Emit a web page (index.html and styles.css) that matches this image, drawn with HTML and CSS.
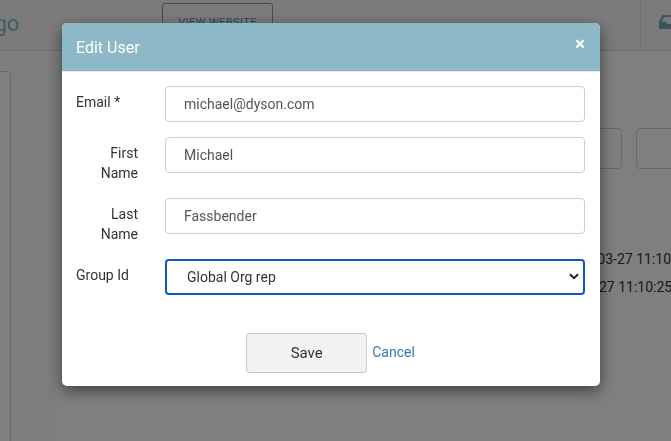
FILE: index.html
```html
<!DOCTYPE html>
<html>
<head>
<meta charset="utf-8">
<link rel="stylesheet" href="styles.css">
</head>
<body>
<div class="page">
  <header class="topbar">
    <div class="logo">Logo</div>
    <a class="view-btn">VIEW WEBSITE</a>
    <div class="spacer"></div>
    <div class="topbar-sep"></div>
    <div class="topbar-icon">
      <svg class="inbox" width="20" height="14" viewBox="0 0 20 14"><path d="M3.5 0h13L20 6.5V14H0V6.5z" fill="#7aa9bf"/><path d="M2.6 6.5h4.6l1.2 2.6h3.2l1.2-2.6h4.6L14.8 2H5.2z" fill="#f4f4f4"/></svg>
    </div>
  </header>
  <div class="content">
    <aside class="side"><div class="side-card"></div></aside>
    <main class="main">
      <div class="toolbar">
        <div class="tbox tbox-a"></div>
        <div class="tbox tbox-b"></div>
      </div>
      <div class="rows">
        <div class="row row-a">2019-03-27 11:10:25</div>
        <div class="row row-b">2019-03-27 11:10:25</div>
      </div>
    </main>
  </div>
</div>

<div class="overlay">
  <div class="modal">
    <div class="modal-header">
      <h4 class="modal-title">Edit User</h4>
      <span class="close">&times;</span>
    </div>
    <div class="modal-body">
      <div class="form-row">
        <label class="lbl">Email *</label>
        <input class="ctl" type="text" value="michael@dyson.com">
      </div>
      <div class="form-row">
        <label class="lbl">First Name</label>
        <input class="ctl" type="text" value="Michael">
      </div>
      <div class="form-row">
        <label class="lbl">Last Name</label>
        <input class="ctl" type="text" value="Fassbender">
      </div>
      <div class="form-row">
        <label class="lbl">Group Id</label>
        <div class="select-wrap">
          <select class="ctl sel"><option>Global Org rep</option></select>
          <svg class="chev" width="10" height="7" viewBox="0 0 10 7"><path d="M1 1.2l4 4 4-4" fill="none" stroke="#222" stroke-width="2"/></svg>
        </div>
      </div>
    </div>
    <div class="modal-footer">
      <button class="btn-save">Save</button>
      <a class="cancel">Cancel</a>
    </div>
  </div>
</div>
</body>
</html>
```
FILE: styles.css
```css
* { box-sizing: border-box; }
html, body { margin: 0; padding: 0; }
body {
  font-family: Roboto, "Liberation Sans", sans-serif;
  font-size: 14px;
  color: #333;
  background: #fff;
  width: 671px;
  height: 441px;
  overflow: hidden;
}
.page { width: 671px; height: 441px; overflow: hidden; }
.topbar {
  height: 51px;
  background: #f6f6f6;
  border-bottom: 1px solid #dcdcdc;
  display: flex;
  align-items: flex-start;
}
.logo {
  margin-left: -30px;
  margin-top: 11px;
  font-size: 22px;
  color: #86b6ca;
  width: 170px;
  flex: none;
}
.view-btn {
  margin-left: 22px;
  margin-top: 3px;
  width: 111px;
  height: 38px;
  border: 1px solid #7a9aa8;
  border-radius: 3px;
  font-size: 11px;
  letter-spacing: 0.4px;
  color: #6c8e9c;
  display: flex;
  justify-content: center;
  padding-top: 12px;
  flex: none;
}
.spacer { flex: 1; min-width: 0; }
.topbar-sep { width: 1px; height: 50px; background: #dcdcdc; flex: none; }
.topbar-icon { width: 30px; flex: none; padding-top: 15px; padding-left: 18px; }
.inbox { display: block; }

.content { display: flex; height: 390px; background: #fff; }
.side { width: 55px; flex: none; background: #fafafa; padding-top: 20px; }
.side-card {
  margin-left: -10px;
  width: 21px;
  height: 380px;
  border: 1px solid #d0d0d0;
  border-radius: 4px;
  background: #fff;
}
.main { flex: 1; min-width: 0; }
.toolbar { display: flex; justify-content: flex-end; gap: 14px; padding-top: 77px; margin-right: -10px; }
.tbox { height: 41px; border: 1px solid #d2d2d2; border-radius: 4px; flex: none; }
.tbox-a { width: 90px; }
.tbox-b { width: 45px; }
.rows { padding-top: 82px; }
.row { height: 28px; white-space: nowrap; font-size: 14px; color: #333; }
.row-a { padding-left: 507px; }
.row-b { padding-left: 489px; }

.overlay {
  position: fixed;
  inset: 0;
  background: rgba(0, 0, 0, 0.5);
}
.modal {
  position: absolute;
  left: 62px;
  top: 23px;
  width: 538px;
  height: 363px;
  background: #fff;
  border-radius: 5px;
  box-shadow: 0 5px 15px rgba(0, 0, 0, 0.5);
  overflow: hidden;
  display: flex;
  flex-direction: column;
}
.modal-header {
  height: 49px;
  flex: none;
  background: #8cb8c8;
  border-bottom: 1px solid #e5e5e5;
  display: flex;
  align-items: center;
  justify-content: space-between;
  padding: 0 14px 0 14px;
}
.modal-title {
  margin: 0;
  font-size: 16px;
  font-weight: 400;
  color: #fff;
}
.close {
  color: #fff;
  font-weight: 700;
  font-size: 19px;
  line-height: 1;
  align-self: flex-start;
  margin-top: 11px;
  margin-right: 1px;
}
.modal-body { padding: 14px 15px 0 14px; display: flex; flex-direction: column; gap: 15px; }
.form-row { display: grid; grid-template-columns: 89px 1fr; align-items: start; }
.lbl {
  justify-self: start;
  max-width: 62px;
  text-align: right;
  line-height: 20px;
  padding-top: 6px;
  font-size: 14px;
  color: #333;
}
.ctl {
  width: 100%;
  height: 36px;
  border: 1px solid #cfcfcf;
  border-radius: 4px;
  padding: 0 0 0 18px;
  font-family: Roboto, "Liberation Sans", sans-serif;
  font-size: 14px;
  color: #555;
  background: #fff;
  outline: none;
}
.select-wrap { position: relative; }
.sel {
  appearance: none;
  -webkit-appearance: none;
  border: 2px solid #0a5ac2;
  padding-left: 20px;
  height: 36px;
  color: #333;
}
.chev { position: absolute; right: 6px; top: 14px; }
.modal-footer {
  margin-top: 38px;
  display: flex;
  justify-content: center;
  align-items: center;
  gap: 5px;
  padding-right: 1px;
}
.btn-save {
  width: 121px;
  height: 40px;
  background: #f2f2f2;
  border: 1px solid #c8c8c8;
  border-radius: 3px;
  font-family: Roboto, "Liberation Sans", sans-serif;
  font-size: 15px;
  color: #333;
}
.cancel { color: #337ab7; font-size: 14px; padding-bottom: 2px; }
```
